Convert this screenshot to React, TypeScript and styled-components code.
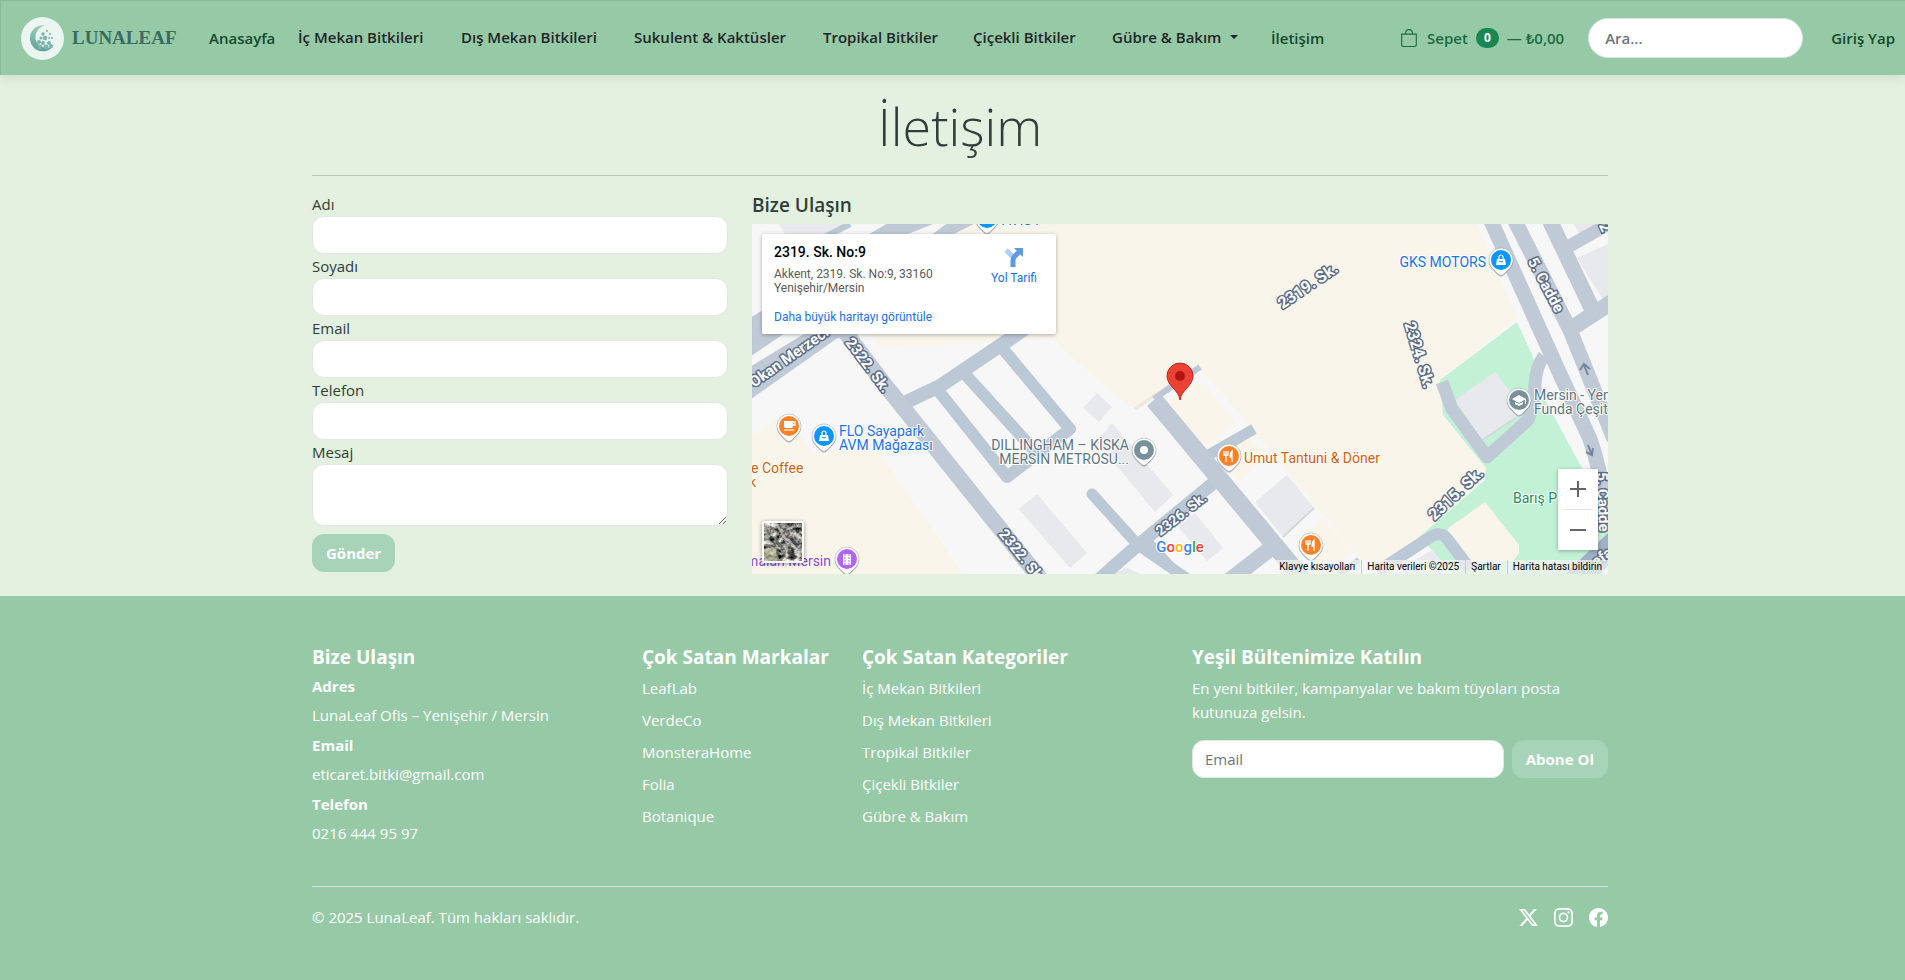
import React from "react";
import styled, { createGlobalStyle } from "styled-components";
import { BsBag, BsFacebook, BsInstagram, BsTwitterX } from "react-icons/bs";

const GlobalStyle = createGlobalStyle`
  *, *::before, *::after { box-sizing: border-box; }
  html { background: #e4f0e0; }
  body {
    margin: 0;
    font-family: "Open Sans", "Noto Sans", sans-serif;
    font-size: 15px;
    line-height: 24px;
    color: #2f3e3a;
    background: #e4f0e0;
  }
  h1, h2, p, ul, dl, dd { margin: 0; padding: 0; }
  ul { list-style: none; }
  a { color: inherit; text-decoration: none; }
  button, input, textarea { font: inherit; }
`;

const Page = styled.div`
  min-height: 100vh;
  display: flex;
  flex-direction: column;
`;

const Navbar = styled.header`
  position: relative;
  z-index: 2;
  display: flex;
  align-items: center;
  height: 75px;
  padding: 0 10px 0 20px;
  background: #96caa6;
  border-top: 1px solid #8abb99;
  border-left: 1px solid #8abb99;
  box-shadow: 0 2px 12px rgba(0, 0, 0, 0.1);
  font-weight: 600;
  white-space: nowrap;
`;

const Brand = styled.a`
  display: flex;
  align-items: center;
  gap: 8px;
  width: 188px;
  font-family: "Liberation Serif", serif;
  font-weight: 700;
  font-size: 19px;
  color: #3a6b60;
`;

const NavList = styled.ul`
  display: flex;
  align-items: center;
`;

const NavItem = styled.li<{ $width: number }>`
  width: ${(p) => p.$width}px;
`;

const NavLink = styled.a<{ $accent?: boolean }>`
  display: flex;
  align-items: center;
  gap: 9px;
  padding-bottom: ${(p) => (p.$accent ? 0 : 2)}px;
  color: ${(p) => (p.$accent ? "#14492b" : "#212529")};
`;

const Caret = styled.span`
  border: 4px solid transparent;
  border-top-color: currentColor;
  border-bottom: 0;
`;

const NavEnd = styled.div`
  display: flex;
  align-items: center;
  margin-left: auto;
`;

const Cart = styled.a`
  display: flex;
  align-items: center;
  gap: 8px;
  color: #1d6b42;
  svg { margin-right: 1px; }
`;

const Badge = styled.span`
  min-width: 23px;
  height: 20px;
  border-radius: 10px;
  background: #198754;
  color: #fff;
  font-size: 12px;
  font-weight: 700;
  line-height: 20px;
  text-align: center;
`;

const Search = styled.input`
  width: 215px;
  height: 40px;
  margin: 0 28px 0 24px;
  padding: 0 16px;
  border: 1px solid #dee2e6;
  border-radius: 20px;
  background: #fff;
  outline: 0;
  &::placeholder { color: #6c757d; opacity: 1; }
`;

const Login = styled.a`
  color: #14492b;
`;

const Shell = styled.div`
  box-sizing: content-box;
  max-width: 1296px;
  margin: 0 auto;
  padding-left: 15px;
`;

const Title = styled.h1`
  padding-top: 18px;
  text-align: center;
  font-size: 52px;
  font-weight: 300;
  line-height: 66px;
`;

const Rule = styled.hr<{ $color: string }>`
  height: 1px;
  margin: 16px 0;
  border: 0;
  background: ${(p) => p.$color};
`;

const Columns = styled.div`
  display: grid;
  grid-template-columns: 416fr 856fr;
  gap: 24px;
  padding-bottom: 22px;
`;

const Form = styled.form`
  display: flex;
  flex-direction: column;
  align-items: flex-start;
`;

const Field = styled.label`
  display: flex;
  flex-direction: column;
  width: 100%;
`;

const TextBox = styled.input`
  width: 100%;
  height: 38px;
  padding: 0 12px;
  border: 1px solid #e3e6e8;
  border-radius: 12px;
  background: #fff;
  outline: 0;
  &::placeholder { color: #6c757d; opacity: 1; }
`;

const TextArea = styled.textarea`
  width: 100%;
  height: 62px;
  padding: 6px 12px;
  border: 1px solid #e3e6e8;
  border-radius: 12px;
  background: #fff;
  outline: 0;
  resize: vertical;
`;

const Button = styled.button<{ $top?: number }>`
  height: 38px;
  margin-top: ${(p) => p.$top ?? 0}px;
  padding: 0 14px;
  border: 0;
  border-radius: 12px;
  background: #a7d4b9;
  color: #fff;
  font-weight: 700;
  white-space: nowrap;
`;

const Heading = styled.h2<{ $weight?: number; $gap?: number }>`
  margin-bottom: ${(p) => p.$gap ?? 6}px;
  font-size: 19px;
  font-weight: ${(p) => p.$weight ?? 700};
  line-height: 26px;
`;

const MapFrame = styled.div`
  position: relative;
  height: 350px;
  overflow: hidden;
  background: #f7f7f7;
  font-family: Roboto, sans-serif;
`;

const MapDrawing = styled.svg`
  display: block;
  width: 100%;
  height: 100%;
`;

const InfoCard = styled.div`
  position: absolute;
  left: 10px;
  top: 10px;
  display: flex;
  justify-content: space-between;
  width: 294px;
  height: 100px;
  padding: 10px 19px 0 12px;
  border-radius: 2px;
  background: #fff;
  box-shadow: 0 1px 4px rgba(0, 0, 0, 0.3);
  font-size: 12px;
  line-height: 14px;
  color: #5b5b5b;
  a { color: #1a73e8; }
`;

const InfoText = styled.div`
  display: flex;
  flex-direction: column;
  strong {
    margin-bottom: 7px;
    font-size: 14px;
    font-weight: 500;
    line-height: 16px;
    color: #000;
  }
  a { margin-top: 15px; }
`;

const Directions = styled.a`
  display: flex;
  flex-direction: column;
  align-items: center;
  gap: 4px;
  padding-top: 3px;
`;

const ZoomControl = styled.div`
  position: absolute;
  right: 10px;
  bottom: 24px;
  width: 40px;
  padding: 0 5px;
  background: #fff;
  box-shadow: 0 1px 4px rgba(0, 0, 0, 0.3);
  button {
    display: block;
    width: 30px;
    height: 40px;
    padding: 6px;
    border: 0;
    background: none;
  }
  button + button {
    height: 41px;
    border-top: 1px solid #e6e6e6;
  }
  svg { display: block; }
`;

const LayerButton = styled.button`
  position: absolute;
  left: 10px;
  bottom: 11px;
  width: 42px;
  height: 42px;
  padding: 0;
  border: 2px solid #fff;
  border-radius: 2px;
  overflow: hidden;
  box-shadow: 0 1px 4px rgba(0, 0, 0, 0.4);
  svg { display: block; }
`;

const Attribution = styled.div`
  position: absolute;
  right: 0;
  bottom: 0;
  display: flex;
  height: 14px;
  background: rgba(245, 245, 245, 0.7);
  font-size: 10px;
  line-height: 14px;
  color: #000;
  a { padding: 0 6px; }
  a + a { padding-left: 5px; border-left: 1px solid #c3ccd3; }
`;

const Footer = styled.footer`
  flex: 1;
  padding-top: 48px;
  background: #96caa6;
  color: #fff;
`;

const FooterGrid = styled.div`
  display: grid;
  grid-template-columns: 306fr 196fr 306fr 416fr;
  gap: 24px;
`;

const Contact = styled.dl`
  dt { font-weight: 700; line-height: 30px; }
  dd { line-height: 29px; }
`;

const LinkList = styled.ul`
  display: flex;
  flex-direction: column;
  gap: 8px;
`;

const Subscribe = styled.form`
  display: flex;
  gap: 8px;
  margin-top: 16px;
`;

const FooterEnd = styled.div`
  display: flex;
  justify-content: space-between;
  align-items: center;
  height: 28px;
`;

const Social = styled.div`
  display: flex;
  gap: 16px;
  a { display: flex; }
`;

const FooterRule = styled(Rule)`
  margin: 38px 0 16px;
`;

const navItems = [
  { label: "Anasayfa", width: 89, accent: true },
  { label: "İç Mekan Bitkileri", width: 163 },
  { label: "Dış Mekan Bitkileri", width: 173 },
  { label: "Sukulent & Kaktüsler", width: 189 },
  { label: "Tropikal Bitkiler", width: 150 },
  { label: "Çiçekli Bitkiler", width: 139 },
  { label: "Gübre & Bakım", width: 159, caret: true },
  { label: "İletişim", width: 54, accent: true },
];

const brands = ["LeafLab", "VerdeCo", "MonsteraHome", "Folia", "Botanique"];
const categories = ["İç Mekan Bitkileri", "Dış Mekan Bitkileri", "Tropikal Bitkiler", "Çiçekli Bitkiler", "Gübre & Bakım"];

function Logo() {
  return (
    <svg width="43" height="43" viewBox="0 0 43 43" aria-hidden="true">
      <defs>
        <linearGradient id="moon" x1="0" y1="0" x2="0" y2="1">
          <stop offset="0" stopColor="#9ccdb7" />
          <stop offset="1" stopColor="#5a9e99" />
        </linearGradient>
      </defs>
      <circle cx="21.5" cy="21.5" r="21.5" fill="#ebf6f1" />
      <path d="M24 8.500A13 13 0 1 0 33 28A11.500 11.500 0 0 1 15 24A12 12 0 0 1 24 8.500Z" fill="url(#moon)" />
      <g fill="#79b5aa">
        <circle cx="22" cy="17" r="1.800" /><circle cx="24" cy="21" r="2.200" /><circle cx="20" cy="21" r="1.500" />
        <circle cx="18" cy="25" r="2" /><circle cx="22" cy="26" r="2" /><circle cx="28" cy="26" r="2" />
        <circle cx="25" cy="30" r="2.500" /><circle cx="30" cy="29" r="2" /><circle cx="19" cy="30" r="2.500" />
        <circle cx="26" cy="14" r="1" /><circle cx="29" cy="17" r="1" /><circle cx="31" cy="21" r="1" /><circle cx="28" cy="21" r="1" />
      </g>
    </svg>
  );
}

type PinKind = "bag" | "cup" | "dot" | "film" | "food" | "school";

function Glyph({ kind }: { kind: PinKind }) {
  switch (kind) {
    case "bag":
      return (
        <g>
          <path d="M-4 -1H4L5 5H-5Z" fill="#fff" />
          <path d="M-2 -1V-3A2 2 0 0 1 2 -3V-1" fill="none" stroke="#fff" strokeWidth="1.200" />
          <path d="M-2 1Q0 3 2 1" fill="none" stroke="#0a8bf0" />
        </g>
      );
    case "cup":
      return (
        <g>
          <path d="M-5 -5H4V0A2 2 0 0 1 2 2H-3A2 2 0 0 1 -5 0Z" fill="#fff" />
          <path d="M3 -4H6V-1H3" fill="none" stroke="#fff" strokeWidth="1.300" />
          <path d="M-5 4H5" stroke="#fff" strokeWidth="1.200" />
        </g>
      );
    case "film":
      return (
        <g>
          <path d="M-4 -5H4V6H-4Z" fill="#fff" />
          <path d="M-2 -5V6M2 -5V6" stroke="#b065f5" strokeDasharray="2 1" />
        </g>
      );
    case "food":
      return (
        <g fill="none" stroke="#fff" strokeWidth="1.300">
          <path d="M-5 -5V-1H-1V-5M-3 -5V6" />
          <path d="M3 6V-5Q1 -3 1 1H3" fill="#fff" />
        </g>
      );
    case "school":
      return (
        <g fill="#fff">
          <path d="M0 -5L7 -1L0 3L-7 -1Z" />
          <path d="M-4 2V4L0 6L4 4V2L0 4Z" />
          <path d="M6 -1H7V4H6Z" />
        </g>
      );
    default:
      return <circle r="4" fill="#fff" />;
  }
}

function Pin({ x, y, color, kind }: { x: number; y: number; color: string; kind: PinKind }) {
  return (
    <g transform={`translate(${x} ${y})`}>
      <path d="M-12 0A12 12 0 1 1 12 0C12 6 8 9 3 14Q0 17 -3 14C-8 9 -12 6 -12 0Z" fill="#7a8794" opacity="0.700" transform="translate(0 1)" />
      <path d="M-12 0A12 12 0 1 1 12 0C12 6 8 9 3 14Q0 17 -3 14C-8 9 -12 6 -12 0Z" fill="#fff" stroke="#7a8794" strokeOpacity="0.400" strokeWidth="1" />
      <circle r="10" fill={color} />
      <Glyph kind={kind} />
    </g>
  );
}

function Street({ x, y, angle, size = 15, anchor = "middle", children }: {
  x: number; y: number; angle: number; size?: number; anchor?: "start" | "middle"; children: React.ReactNode;
}) {
  return (
    <text
      transform={`translate(${x} ${y}) rotate(${angle})`}
      y={5}
      textAnchor={anchor}
      fontSize={size}
      fontWeight="700"
      fill="#fff"
      stroke="#5b6d87"
      strokeWidth="3"
      strokeLinejoin="round"
      paintOrder="stroke"
    >
      {children}
    </text>
  );
}

function Place({ x, y, color, anchor = "start", children }: {
  x: number; y: number; color: string; anchor?: "start" | "end"; children: React.ReactNode;
}) {
  return (
    <text x={x} y={y} textAnchor={anchor} fontSize="14" fill={color} stroke="#fff" strokeWidth="2" strokeLinejoin="round" paintOrder="stroke">
      {children}
    </text>
  );
}

function CityMap() {
  return (
    <MapDrawing viewBox="0 0 856 350" preserveAspectRatio="xMidYMid slice" role="img" aria-label="Harita">
      <rect width="856" height="350" fill="#f7f7f7" />
      <g fill="#f9f5ea">
        <path d="M205 0H725L765 94L688 156L691 191L734 244L733 256L666 314L633 336L610 338L478 178L448 146L440 149L383 185L351 161L300 115L128 124L120 112Z" />
        <path d="M0 211L31 191L63 229L121 219L136 241L211 350H0Z" />
        <path d="M413 179L440 160L453 161L483 198L453 224Z" />
        <path d="M496 211L513 233L488 259L468 238Z" />
        <path d="M571 294L600 328L585 338H560L543 318Z" />
      </g>
      <path d="M765 98L781 133L788 160L803 194L831 244L856 300V314L815 350H700L673 318L666 314L733 256L734 244L691 191L688 156Z" fill="#c3f1d5" />
      <path d="M733 278L767 321V329L761 337L716 338L696 308Q695 304 699 302Z" fill="#f9f5ea" />
      <path d="M795 144L803 160L856 290L825 235L803 194L790 170Z" fill="#f7f7f7" />
      <g fill="#e8e9ed">
        <path d="M27 0H95L45 30Z" />
        <path d="M345 169L360 183L347 198L331 184Z" />
        <path d="M360 199L421 271L403 288L345 218Z" />
        <path d="M285 270L335 329L318 344L267 285Z" />
        <path d="M443 289L471 324L455 337L426 303Z" />
        <path d="M535 251L562 284L531 313L503 278Z" />
        <path d="M374 343L388 350H362Z" />
        <path d="M743 148L770 182L765 193L730 216L703 176Z" />
        <path d="M825 34L856 20V74H850Z" />
        <path d="M822 0H845L828 11Z" />
        <path d="M655 340L681 326L694 345L690 350H650Z" />
      </g>
      <path d="M562 284L531 313M765 193L730 216" stroke="#d5d7de" strokeWidth="2" />
      <path d="M383 185L418 161" stroke="#eee8da" strokeWidth="3" />
      <g fill="#c0cad7" stroke="#b0bccb" strokeWidth="0.500">
        <path d="M0 93L10 87L118 10L135 0H180L155 10L31 110L0 131Z" />
        <path d="M0 142L51 111L181 10L195 0H221L201 10L105 111L85 114L0 174Z" />
      </g>
      <g fill="none" stroke="#bbc8d6" strokeLinejoin="round">
        <path d="M55 22L98 0" strokeWidth="6" />
        <path d="M150 180L188 162L280 100" strokeWidth="14" />
        <path d="M185 165L255 253L318 205L246 119M211 148L282 226" strokeWidth="12" />
        <path d="M340 270L386 321L440 358" strokeWidth="11" strokeLinecap="round" />
        <path d="M345 357L386 321L465 256" strokeWidth="13" />
        <path d="M455 232L502 205" strokeWidth="11" />
        <path d="M402 175L448 143" strokeWidth="6" />
        <path d="M386 321L398 320L428 353" strokeWidth="10" />
        <path d="M625 348L680 312Q690 307 696 316L718 345" strokeWidth="12" />
        <path d="M588 350L607 336" strokeWidth="6" />
      </g>
      <g fill="none" stroke="#c0cad7" strokeLinejoin="round">
        <path d="M93 108L133 161L290 357" strokeWidth="16" />
        <path d="M402 176L550 354" strokeWidth="18" />
        <path d="M527 318L478 356" strokeWidth="16" />
        <path d="M690 158L700 185L735 233L776 196Q783 180 783 160Q784 142 792 132" strokeWidth="13" />
        <path d="M739 -3L808 150L838 215Q850 250 856 300" strokeWidth="15" />
        <path d="M763 -3L818 106L862 215" strokeWidth="15" />
        <path d="M798 -3L841 87" strokeWidth="16" />
        <path d="M814 24L860 -2" strokeWidth="13" />
        <path d="M820 104L860 78" strokeWidth="16" />
      </g>
      <path d="M822 358L864 318" stroke="#9fb0c8" strokeWidth="24" />
      <g fill="none" stroke="#76869a" strokeWidth="2">
        <path d="M836 151L832 141M828 146L832 140L838 145" />
        <path d="M836 221L840 231M834 228L840 231L841 224" />
      </g>

      <Street x={37} y={133} angle={-35}>Okan Merzeci</Street>
      <Street x={116} y={141} angle={53}>2322. Sk.</Street>
      <Street x={250} y={307} angle={51} anchor="start">2322. Sk.</Street>
      <Street x={429} y={290} angle={-38} size={14}>2326. Sk.</Street>
      <Street x={556} y={62} angle={-34} size={16}>2319. Sk.</Street>
      <Street x={667} y={131} angle={73} size={16}>2324. Sk.</Street>
      <Street x={794} y={61} angle={62}>5. Cadde</Street>
      <Street x={704} y={270} angle={-43} size={16}>2315. Sk.</Street>
      <Street x={851} y={278} angle={88}>5. Cadde</Street>
      <Street x={850} y={333} angle={-35}>efa</Street>
      <Street x={853} y={3} angle={65}>2</Street>

      <Pin x={235} y={-6} color="#0a95ff" kind="bag" />
      <Place x={250} y={1} color="#1a73e8">AVIS I</Place>
      <Place x={734} y={43} color="#1a73e8" anchor="end">GKS MOTORS</Place>
      <Pin x={749} y={36} color="#0a95ff" kind="bag" />
      <Pin x={37} y={202} color="#ff8126" kind="cup" />
      <Pin x={72} y={212} color="#0a95ff" kind="bag" />
      <Place x={87} y={212} color="#1a73e8">FLO Sayapark</Place>
      <Place x={87} y={226} color="#1a73e8">AVM Mağazası</Place>
      <Place x={-1} y={249} color="#d5600c">e Coffee</Place>
      <Place x={-3} y={263} color="#d5600c">k</Place>
      <Place x={377} y={226} color="#5d7583" anchor="end">DILLINGHAM – KİSKA</Place>
      <Place x={377} y={240} color="#5d7583" anchor="end">MERSİN METROSU...</Place>
      <Pin x={392} y={226} color="#78909c" kind="dot" />
      <Place x={79} y={342} color="#8a45d6" anchor="end">rmalan Mersin</Place>
      <Pin x={95} y={335} color="#b065f5" kind="film" />
      <Pin x={477} y={232} color="#ff8126" kind="food" />
      <Place x={492} y={239} color="#d5600c">Umut Tantuni &amp; Döner</Place>
      <Pin x={559} y={321} color="#ff8126" kind="food" />
      <Pin x={767} y={176} color="#78909c" kind="school" />
      <Place x={782} y={176} color="#5d7583">Mersin - Yenişehir</Place>
      <Place x={782} y={190} color="#5d7583">Funda Çeşit</Place>
      <Place x={761} y={279} color="#1e8e5a">Barış Parkı</Place>

      <path d="M428 176C427 166 415 162 415 152A13 13 0 0 1 441 152C441 162 429 166 428 176Z" fill="#ea4335" stroke="#c5221f" strokeWidth="1" />
      <circle cx="428" cy="152" r="5" fill="#b31412" />

      <text x="428" y="328" textAnchor="middle" fontSize="15" fontWeight="500" stroke="#fff" strokeWidth="2" paintOrder="stroke">
        <tspan fill="#4285f4">G</tspan><tspan fill="#ea4335">o</tspan><tspan fill="#fbbc04">o</tspan>
        <tspan fill="#4285f4">g</tspan><tspan fill="#34a853">l</tspan><tspan fill="#ea4335">e</tspan>
      </text>
    </MapDrawing>
  );
}

function MapPanel() {
  return (
    <MapFrame>
      <CityMap />
      <InfoCard>
        <InfoText>
          <strong>2319. Sk. No:9</strong>
          <span>Akkent, 2319. Sk. No:9, 33160</span>
          <span>Yenişehir/Mersin</span>
          <a href="#harita">Daha büyük haritayı görüntüle</a>
        </InfoText>
        <Directions href="#yol">
          <svg width="20" height="20" viewBox="0 0 20 20" aria-hidden="true">
            <path d="M2 3L9 10" stroke="#b3d0f8" strokeWidth="5" />
            <path d="M9 20V13Q9 11 11 9L16 4" fill="none" stroke="#5c9ae8" strokeWidth="5" />
            <path d="M10 1H19V10Z" fill="#5c9ae8" />
          </svg>
          Yol Tarifi
        </Directions>
      </InfoCard>
      <LayerButton type="button" aria-label="Uydu görüntüsü">
        <svg width="38" height="38" viewBox="0 0 38 38">
          <filter id="terrain" x="0" y="0" width="100%" height="100%" colorInterpolationFilters="sRGB">
            <feTurbulence type="fractalNoise" baseFrequency="0.160 0.220" numOctaves="4" seed="8" />
            <feColorMatrix values="1.600 0.300 0 0 -0.400  1.500 0.400 0 0 -0.400  1.450 0.400 0 0 -0.400  0 0 0 0 1" />
          </filter>
          <rect width="38" height="38" fill="#8d8d88" />
          <rect width="38" height="38" filter="url(#terrain)" />
          <path d="M0 38V26L10 24L16 38Z" fill="#c9c79d" opacity="0.500" />
          <path d="M12 0L20 14L38 30" fill="none" stroke="#c4bec2" strokeWidth="2" opacity="0.700" />
          <path d="M20 6L26 12M27 15L34 24M12 18L20 27M24 28L32 35" stroke="#34363c" strokeWidth="3" opacity="0.600" />
        </svg>
      </LayerButton>
      <ZoomControl>
        <button type="button" aria-label="Yakınlaştır">
          <svg width="18" height="28" viewBox="0 0 18 28"><path d="M1 14H17M9 6V22" stroke="#666" strokeWidth="2" /></svg>
        </button>
        <button type="button" aria-label="Uzaklaştır">
          <svg width="18" height="28" viewBox="0 0 18 28"><path d="M1 14H17" stroke="#666" strokeWidth="2" /></svg>
        </button>
      </ZoomControl>
      <Attribution>
        <a href="#klavye">Klavye kısayolları</a>
        <a href="#veri">Harita verileri ©2025</a>
        <a href="#sartlar">Şartlar</a>
        <a href="#hata">Harita hatası bildirin</a>
      </Attribution>
    </MapFrame>
  );
}

export default function App() {
  return (
    <Page>
      <GlobalStyle />
      <Navbar>
        <Brand href="#"><Logo />LUNALEAF</Brand>
        <nav>
          <NavList>
            {navItems.map((item) => (
              <NavItem key={item.label} $width={item.width}>
                <NavLink href="#" $accent={item.accent}>
                  {item.label}
                  {item.caret && <Caret />}
                </NavLink>
              </NavItem>
            ))}
          </NavList>
        </nav>
        <NavEnd>
          <Cart href="#sepet">
            <BsBag size={18} />
            Sepet
            <Badge>0</Badge>
            <span>— ₺0,00</span>
          </Cart>
          <Search type="search" placeholder="Ara..." aria-label="Ara" />
          <Login href="#giris">Giriş Yap</Login>
        </NavEnd>
      </Navbar>

      <main>
        <Shell>
          <Title>İletişim</Title>
          <Rule $color="#b9c5b6" />
          <Columns>
            <Form>
              <Field>Adı<TextBox type="text" /></Field>
              <Field>Soyadı<TextBox type="text" /></Field>
              <Field>Email<TextBox type="email" /></Field>
              <Field>Telefon<TextBox type="tel" /></Field>
              <Field>Mesaj<TextArea /></Field>
              <Button type="button" $top={8}>Gönder</Button>
            </Form>
            <section>
              <Heading $weight={600}>Bize Ulaşın</Heading>
              <MapPanel />
            </section>
          </Columns>
        </Shell>
      </main>

      <Footer>
        <Shell>
          <FooterGrid>
            <section>
              <Heading $gap={1}>Bize Ulaşın</Heading>
              <Contact>
                <dt>Adres</dt>
                <dd>LunaLeaf Ofis – Yenişehir / Mersin</dd>
                <dt>Email</dt>
                <dd>eticaret.bitki@gmail.com</dd>
                <dt>Telefon</dt>
                <dd>0216 444 95 97</dd>
              </Contact>
            </section>
            <section>
              <Heading>Çok Satan Markalar</Heading>
              <LinkList>{brands.map((b) => <li key={b}><a href="#">{b}</a></li>)}</LinkList>
            </section>
            <section>
              <Heading>Çok Satan Kategoriler</Heading>
              <LinkList>{categories.map((c) => <li key={c}><a href="#">{c}</a></li>)}</LinkList>
            </section>
            <section>
              <Heading>Yeşil Bültenimize Katılın</Heading>
              <p>En yeni bitkiler, kampanyalar ve bakım tüyoları posta kutunuza gelsin.</p>
              <Subscribe>
                <TextBox type="email" placeholder="Email" aria-label="Email" />
                <Button type="button">Abone Ol</Button>
              </Subscribe>
            </section>
          </FooterGrid>
          <FooterRule $color="#dee2e6" />
          <FooterEnd>
            <span>© 2025 LunaLeaf. Tüm hakları saklıdır.</span>
            <Social>
              <a href="#x" aria-label="X"><BsTwitterX size={19} /></a>
              <a href="#instagram" aria-label="Instagram"><BsInstagram size={19} /></a>
              <a href="#facebook" aria-label="Facebook"><BsFacebook size={19} /></a>
            </Social>
          </FooterEnd>
        </Shell>
      </Footer>
    </Page>
  );
}
